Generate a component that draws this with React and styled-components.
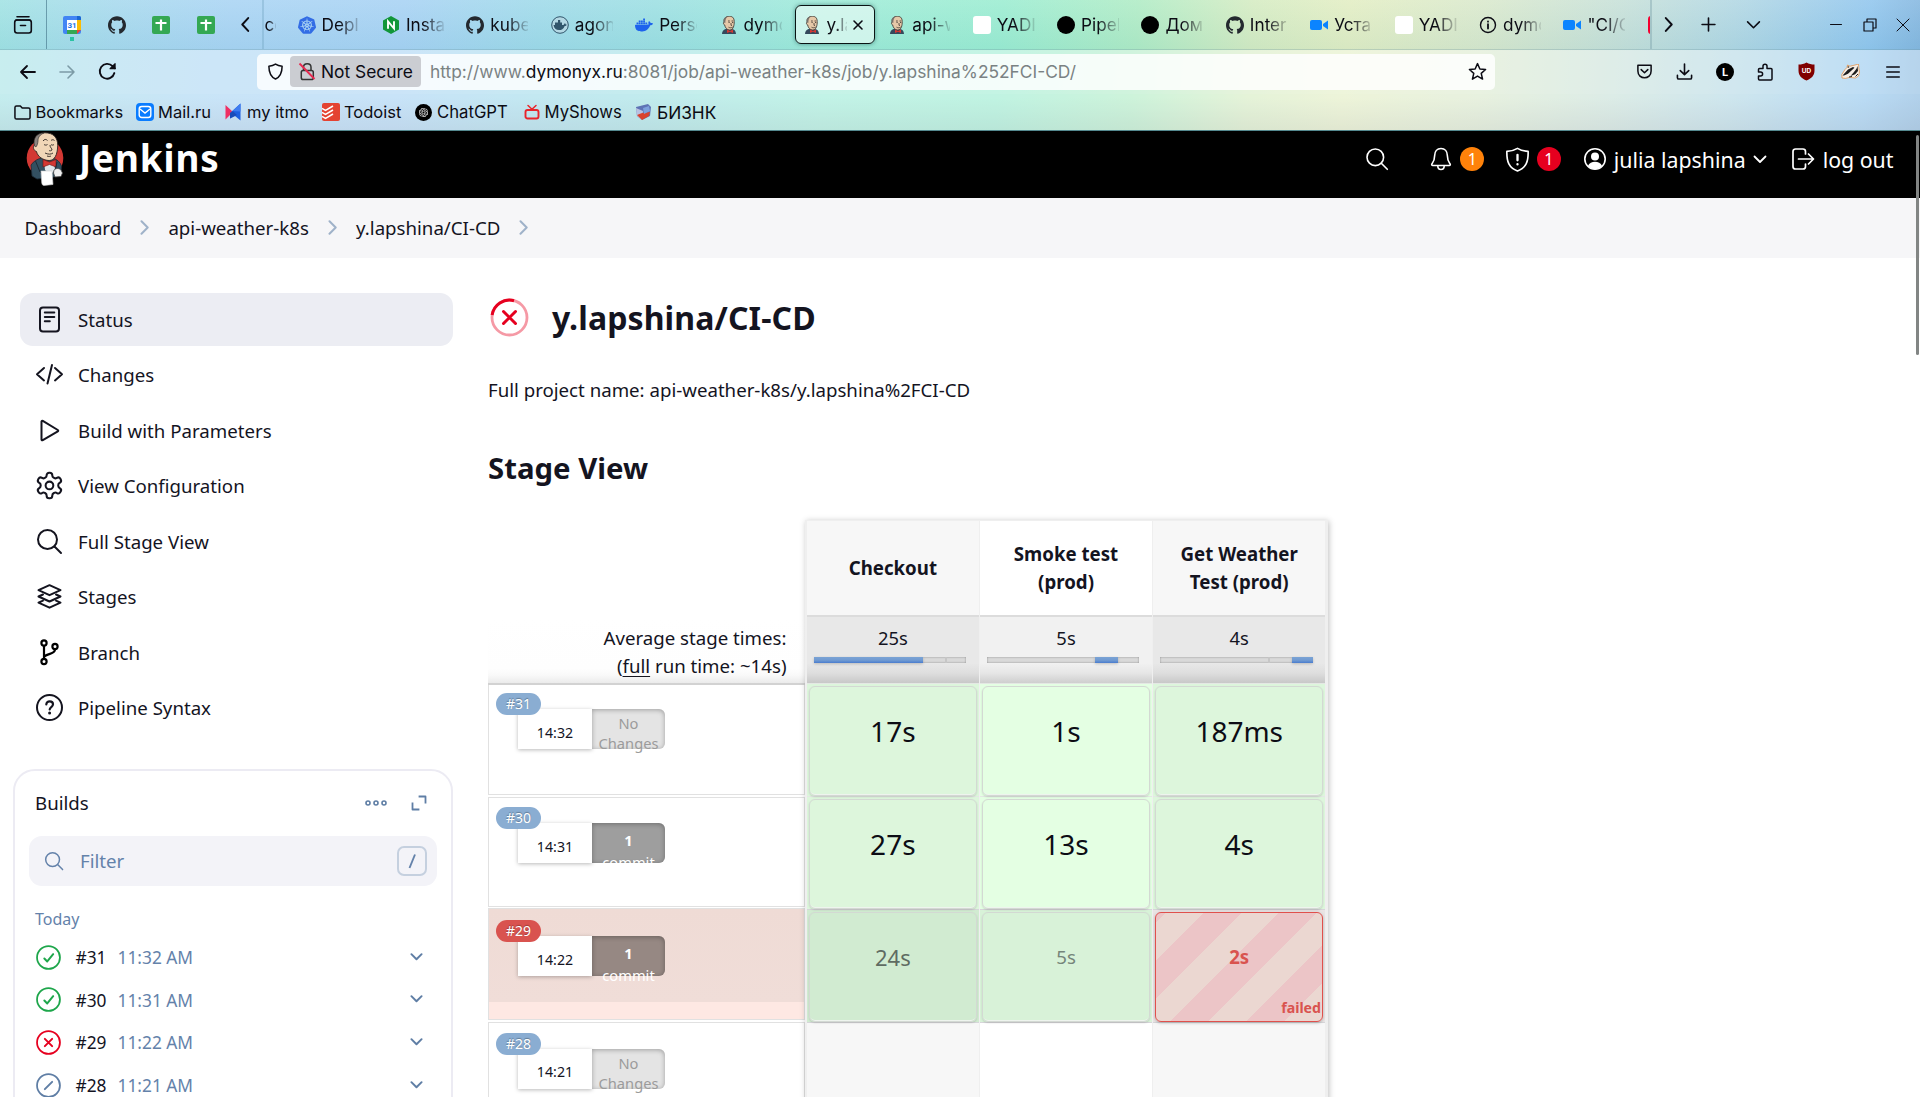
import React from "react";
import styled, { createGlobalStyle, css } from "styled-components";
import { SiKubernetes, SiGithub, SiDocker } from "react-icons/si";
import { RiOpenaiFill } from "react-icons/ri";

const NOTO = `"Noto Sans", "Open Sans", sans-serif`;
const CHROME = `Inter, "Noto Sans", sans-serif`;

const Global = createGlobalStyle`
  *, *::before, *::after { box-sizing: border-box; }
  html, body { margin: 0; padding: 0; height: 1097px; overflow: hidden; background: #fff; }
  svg { display: block; flex: none; }
`;

const Window = styled.div`
  position: relative;
  width: 1920px;
  height: 1097px;
  overflow: hidden;
  display: flex;
  flex-direction: column;
  background: #fff;
  font-family: ${NOTO};
  font-size: 18.67px;
  color: #14141f;
`;

/* ---------- browser chrome ---------- */

const Chrome = styled.header`
  height: 131px;
  flex: none;
  display: flex;
  flex-direction: column;
  font-family: ${CHROME};
  font-size: 16.5px;
  color: #0c0c14;
  border-bottom: 1px solid #54898f;
  background:
    linear-gradient(180deg, rgba(255,255,255,.1) 0%, rgba(0,110,140,.05) 38%, rgba(255,255,255,0) 39%, rgba(255,255,255,0) 75%, rgba(40,40,60,.1) 100%),
    linear-gradient(94deg, #a3e3e4 0%, #a9daee 6%, #abd5f4 12%, #a9d3f4 21%, #a1dbea 28%, #9ee0e3 34%, #a0ecd9 43%, #9dedd2 52%, #b1ecc6 59%, #d6ecc3 65%, #e3eec4 70%, #dae9cd 77%, #c8e1d9 84%, #b3d8e4 90%, #93c7ee 97%, #85b6de 100%);
`;

const TabStrip = styled.div`
  height: 50px;
  display: flex;
  align-items: stretch;
  border-bottom: 1px solid rgba(110, 150, 160, 0.3);
`;

const IconSlot = styled.div`
  width: ${(p) => p.$w}px;
  display: flex;
  align-items: center;
  justify-content: center;
  flex: none;
  border-right: ${(p) => (p.$line ? "1px solid rgba(70,120,140,.65)" : "0")};
`;

const Pinned = styled.div`
  position: relative;
  width: 44.6px;
  display: flex;
  align-items: center;
  justify-content: center;
`;

const Dot = styled.span`
  position: absolute;
  left: 20px;
  top: 37px;
  width: 4px;
  height: 4px;
  background: #2ac3a2;
`;

const Tabs = styled.div`
  width: 1390px;
  flex: none;
  display: flex;
  overflow: hidden;
  border-left: 2px solid rgba(110, 160, 190, 0.35);
  border-right: 2px solid rgba(110, 150, 160, 0.35);
  padding: 5px 0;
`;

const Tab = styled.div`
  width: 80px;
  height: 39px;
  margin: 0 4.4px 0 0;
  padding-left: 9px;
  flex: none;
  display: flex;
  align-items: center;
  gap: 6px;
  border-radius: 6px;
  ${(p) =>
    p.$active &&
    css`
      background: rgba(233, 250, 246, 0.65);
      border: 1.5px solid #0a1414;
      padding-left: 7.5px;
      gap: 5px;
      box-shadow: 0 0 4px rgba(0, 60, 60, 0.5);
    `}
`;

const PartTab = styled.div`
  width: 19.8px;
  margin-right: 4.4px;
  flex: none;
  display: flex;
  align-items: center;
`;

const TabText = styled.span`
  width: ${(p) => p.$w || 38}px;
  flex: none;
  line-height: 24px;
  font-size: 17.2px;
  white-space: nowrap;
  mask-image: linear-gradient(90deg, #000 45%, rgba(0, 0, 0, 0.1) 100%);
`;

const Square = styled.span`
  width: 18px;
  height: 18px;
  flex: none;
  background: ${(p) => p.$c};
  border-radius: ${(p) => p.$r || "3px"};
`;

const NavBar = styled.div`
  height: 44px;
  padding-bottom: 1px;
  display: flex;
  align-items: center;
  background: rgba(255, 255, 255, 0.4);
`;

const UrlBox = styled.div`
  width: 1238px;
  height: 36px;
  display: flex;
  align-items: center;
  border-radius: 5px;
  background: rgba(255, 255, 255, 0.82);
  padding: 0 8px 0 10px;
  font-size: 17.37px;
`;

const Insecure = styled.div`
  width: 131px;
  height: 31px;
  margin: 0 9px 0 6px;
  padding-left: 8px;
  display: flex;
  align-items: center;
  gap: 5px;
  border-radius: 4px;
  background: #cbcdd2;
  white-space: nowrap;
`;

const Url = styled.span`
  flex: 1;
  color: #7a8283;
  white-space: nowrap;
  b {
    font-weight: 400;
    color: #0c0c14;
  }
`;

const NavIcons = styled.div`
  display: flex;
  flex: 1;
  align-items: center;
  padding-left: 129px;
`;

const Bookmarks = styled.div`
  flex: 1;
  display: flex;
  align-items: center;
  padding: 0 0 0 14px;
  background: rgba(255, 255, 255, 0.36);
`;

const Bookmark = styled.div`
  width: ${(p) => p.$w}px;
  display: flex;
  align-items: center;
  gap: ${(p) => p.$gap || 5}px;
  font-size: ${(p) => p.$fs || 16.5}px;
  white-space: nowrap;
`;

const Toolbar = styled.div`
  display: flex;
  flex-direction: column;
  height: 81px;
`;

/* ---------- page header ---------- */

const PageHead = styled.div`
  height: 67px;
  flex: none;
  background: #000;
  color: #fff;
  display: flex;
  align-items: center;
  padding: 0 26.5px 10.5px 26px;
  font-size: 21.33px;
`;

const Brand = styled.div`
  display: flex;
  align-items: center;
  gap: 15px;
  flex: 1;
`;

const BrandName = styled.span`
  font-size: 36.8px;
  font-weight: 700;
  line-height: 44px;
  margin-top: -3px;
  letter-spacing: 0.9px;
`;

const HeadItem = styled.div`
  display: flex;
  align-items: center;
  gap: ${(p) => p.$gap || 8}px;
  margin-right: ${(p) => p.$mr || 0}px;
  white-space: nowrap;
`;

const Count = styled.span`
  width: 24px;
  height: 24px;
  border-radius: 50%;
  background: ${(p) => p.$c};
  font-size: 16px;
  line-height: 24px;
  text-align: center;
`;

const Crumbs = styled.nav`
  height: 60px;
  flex: none;
  background: #f6f6f8;
  display: flex;
  align-items: center;
  padding: 0 0 2px 24.6px;
`;

const Crumb = styled.span`
  display: flex;
  align-items: center;
  gap: 18.8px;
  margin-right: 19.4px;
`;

/* ---------- body ---------- */

const Body = styled.div`
  flex: 1;
  min-height: 0;
  display: flex;
  overflow: hidden;
`;

const Side = styled.aside`
  width: 488px;
  flex: none;
  padding-top: 35px;
`;

const Menu = styled.div`
  margin-left: 20px;
  width: 433px;
  display: flex;
  flex-direction: column;
  gap: 2.5px;
`;

const MenuItem = styled.div`
  height: 53px;
  padding: 0 0 1px 15px;
  display: flex;
  align-items: center;
  gap: 14px;
  border-radius: 13px;
  background: ${(p) => (p.$on ? "#ecedf3" : "transparent")};
`;

const BuildsCard = styled.section`
  margin: 34.5px 0 0 13px;
  width: 440px;
  height: 420px;
  border: 2px solid #ecebf3;
  border-radius: 22px;
  padding: 14.5px 14px 0;
`;

const BuildsHead = styled.div`
  height: 34px;
  padding: 0 10px 0 6px;
  display: flex;
  align-items: center;
  gap: 24px;
  span { flex: 1; }
`;

const Filter = styled.div`
  margin-top: 16.3px;
  height: 50px;
  padding: 0 10px 0 15px;
  display: flex;
  align-items: center;
  gap: 16px;
  border-radius: 13px;
  background: #f3f3f8;
  color: #6482aa;
  > span { flex: 1; }
`;

const Key = styled.kbd`
  width: 30px;
  height: 30px;
  display: flex;
  align-items: center;
  justify-content: center;
  border: 2px solid #c5d0df;
  border-radius: 7px;
`;

const Today = styled.div`
  margin: 21px 0 5.2px 6px;
  font-size: 16px;
  line-height: 24px;
  color: #6482aa;
`;

const BuildRow = styled.div`
  height: 42.6px;
  padding: 0 14px 0 7px;
  display: flex;
  align-items: center;
  font-size: 17.33px;
  b { width: 42px; margin-left: 14.5px; font-weight: 400; }
  span { flex: 1; color: #6482aa; }
  > svg:last-child { margin-bottom: 2px; }
`;

const Main = styled.main`
  flex: 1;
  min-width: 0;
  padding-top: 34px;
`;

const TitleRow = styled.div`
  height: 51px;
  padding-left: 2px;
  display: flex;
  align-items: center;
  gap: 23px;
`;

const Title = styled.h1`
  margin: 0;
  font-size: 32px;
  line-height: 48px;
  font-weight: 700;
  letter-spacing: 0.12px;
`;

const FullName = styled.p`
  margin: 33px 0 0;
  line-height: 28px;
`;

const Heading = styled.h2`
  margin: 42px 0 0;
  font-size: 29.33px;
  line-height: 44px;
  font-weight: 700;
`;

const StageView = styled.div`
  margin-top: 30px;
  display: flex;
  align-items: flex-start;
`;

const RunColumn = styled.div`
  width: 317px;
  flex: none;
  padding-top: 98px;
`;

const AvgNote = styled.div`
  height: 67px;
  padding: 6px 18.5px 0 0;
  text-align: right;
  line-height: 28px;
  border-bottom: 2px solid #d2d2d2;
  background: linear-gradient(180deg, #fff 0%, #fefefe 78%, #f9f9f9 88%, #ebebeb 100%);
  u { text-underline-offset: 3px; text-decoration-thickness: 1px; }
`;

const Run = styled.div`
  height: ${(p) => (p.$first ? 109.5 : p.$failed ? 111.5 : 110.5)}px;
  margin: ${(p) => (p.$failed ? -1.5 : 0)}px 0 2.4px;
  padding: ${(p) => (p.$first ? 8 : p.$failed ? 11 : 9.5)}px 0 0 7px;
  border: 1px solid #e1e1e1;
  border-top-width: ${(p) => (p.$first ? 0 : 1)}px;
  background: ${(p) =>
    p.$failed ? "linear-gradient(180deg, #efdbd5 0, #f0ddd8 93px, #fee8e3 93px)" : "#fff"};
`;

const RunId = styled.div`
  position: relative;
  width: 45px;
  height: 22px;
  border-radius: 11px;
  background: ${(p) => (p.$failed ? "#d9534f" : "#8aadd2")};
  color: #fff;
  font-size: 14px;
  line-height: 22px;
  text-align: center;
  text-shadow: 0 -1px 1px rgba(0, 0, 0, 0.3);
`;

const RunInfo = styled.div`
  margin: -6px 0 0 22px;
  display: flex;
`;

const RunTime = styled.div`
  width: 74px;
  height: 40px;
  padding-top: 9.5px;
  background: #fff;
  box-shadow: 0 1px 4px rgba(0, 0, 0, 0.28);
  font-size: 14.2px;
  line-height: 28px;
  text-align: center;
`;

const Changes = styled.div`
  width: 73px;
  height: 40px;
  padding-top: ${(p) => (p.$commit ? 6 : 4)}px;
  border-radius: 0 6px 6px 0;
  font-size: 14.67px;
  line-height: ${(p) => (p.$commit ? 22 : 20)}px;
  text-align: center;
  background: ${(p) => (p.$commit ? (p.$failed ? "#968883" : "#9e9e9e") : "#e4e4e4")};
  color: ${(p) => (p.$commit ? "#fff" : "#9b9b9b")};
  box-shadow: inset 0 1px 5px rgba(0, 0, 0, 0.3);
  b { display: block; line-height: 22px; }
`;

const StageGrid = styled.div`
  width: 522.5px;
  height: 620px;
  display: grid;
  grid-template-columns: repeat(3, 173.2px);
  grid-template-rows: 95.5px 66.5px repeat(3, 113px) 113px;
  background: #efefef;
  border: 1.5px solid #efefef;
  border-left-width: 2px;
  box-shadow: 1px 1px 6px rgba(0, 0, 0, 0.25);
`;

const tone = (odd, oddTone, evenTone) => (odd ? oddTone : evenTone);

const StageHead = styled.div`
  margin-right: 1.5px;
  padding: 0 20px;
  display: flex;
  align-items: center;
  justify-content: center;
  text-align: center;
  font-weight: 700;
  font-size: 18.67px;
  line-height: 28px;
  background: ${(p) => tone(p.$odd, "#f7f7f7", "#fff")};
  border-bottom: 2px solid #dcdcdc;
`;

const StageAvg = styled.div`
  margin-right: 1.5px;
  padding: 7.5px 12.5px 0 6.5px;
  background: ${(p) =>
    tone(
      p.$odd,
      "linear-gradient(180deg, #e8e8e8 0%, #e8e8e8 70%, #dedede 85%, #c8c8c8 100%)",
      "linear-gradient(180deg, #f1f1f1 0%, #f1f1f1 70%, #e6e6e6 85%, #cecece 100%)"
    )};
  span { display: block; text-align: center; line-height: 28px; padding-left: 6px; font-size: 18.4px; }
`;

const Track = styled.div`
  margin-top: 4.5px;
  height: 6px;
  display: flex;
  background: #d9d9d9;
  box-shadow: inset 0 0 2px rgba(0, 0, 0, 0.4);
`;

const Fill = styled.div`
  height: 6px;
  background: linear-gradient(180deg, #7ba3d4 0, #6f9ad2 55%, #4a7cce 100%);
  box-shadow: 0 1px 3px rgba(0, 0, 0, 0.2);
`;

const Notch = styled.div`
  width: 2px;
  height: 6px;
  background: #c6c6c6;
`;

const Cell = styled.div`
  margin-right: 1.5px;
  padding: 1.5px 2px 0;
  background: ${(p) => p.$bg};
  border-top: 1px solid ${(p) => (p.$dim ? "#d6d6d9" : "#e4e8e4")};
`;

const CellInner = styled.div`
  position: relative;
  height: 110.5px;
  padding-top: 24.5px;
  border: 1px solid #d3d9d3;
  border-radius: 6px;
  box-shadow: inset 0 -2px 0 -1px #eef4ee, 0 1px 2px rgba(0, 0, 0, 0.14);
  text-align: center;
  font-size: ${(p) => p.$fs}px;
  line-height: 40px;
  color: ${(p) => p.$c};
  ${(p) =>
    p.$failed &&
    css`
      border: 1.5px solid #e0504c;
      font-weight: 700;
      background: repeating-linear-gradient(135deg, #ecc5c7 0 6.8px, #ebd7d1 6.8px 33.5px, #ecc5c7 33.5px 53.4px);
      box-shadow: 0 1px 3px rgba(0, 0, 0, 0.25);
    `}
`;

const FailedTag = styled.span`
  position: absolute;
  right: 1px;
  bottom: 3px;
  font-size: 14.2px;
  line-height: 20px;
  font-weight: 700;
`;

const Scrollbar = styled.div`
  position: absolute;
  right: 1px;
  top: 135px;
  width: 3px;
  height: 220px;
  border-radius: 2px;
  background: #828584;
`;

/* ---------- icons ---------- */

const Line = ({ s = 24, w = 1.5, c = "currentColor", children, vb = 24 }) => (
  <svg width={s} height={s} viewBox={`0 0 ${vb} ${vb}`} fill="none" stroke={c} strokeWidth={w} strokeLinecap="round" strokeLinejoin="round">
    {children}
  </svg>
);

const Butler = ({ s = 18 }) => (
  <svg width={s} height={s} viewBox="0 0 18 18">
    <path d="M2 18c0-2.500 1.500-4.500 3.500-5h6.500c2.500.5 3.800 2 4 5z" fill="#35495c" />
    <path d="M4 6C3.600 2 6 .3 9.500.3s5 2.200 4.700 6.700c-.2 4.200-1.700 7-4.500 7C7 14 5 11.500 4.700 9 3.400 8.500 3 7 4 6z" fill="#e6c8a8" stroke="#3a322d" strokeWidth=".8" />
    <path d="M4 6.500C2.800 2.500 5 .6 8 .5 5.800 1.800 5.400 3.500 5.300 7z" fill="#77716c" />
    <path d="M8 5h1.800M11.500 5h1.700M8.500 6.500h1.200M12 6.500h1.200M11 7v2.300l1 .1M8.500 11.200c1.500.8 3 .8 4.200-.1" stroke="#3a322d" strokeWidth=".8" fill="none" />
    <path d="m7 13.500 3 1.400 3-1.400v3.600l-3-1.300-3 1.300z" fill="#d33833" />
  </svg>
);

const JenkinsLogo = () => (
  <svg width="38" height="54" viewBox="0 0 38 54">
    <ellipse cx="19" cy="26" rx="18.300" ry="19" fill="#d33833" />
    <path d="M5 33c3-4 6-6 11-7h10c5 1 8 4 9.500 8l-.5 8-7 3-17 2-5-3z" fill="#335061" stroke="#1d2b36" strokeWidth=".8" />
    <path d="M8.500 13C7.500 5 12 .8 19 .8c8 0 13 4.500 12.700 13-.3 9-3 14.700-8.500 14.700-6 0-11.700-4-12.700-9-3-1-4-4.500-2-6.500z" fill="#f0d6b7" stroke="#2b2522" strokeWidth=".9" />
    <path d="M8.500 14C6.500 6 11 1 18 .9c-4 2-6 4-6 8 0 2-1 5-2 6z" fill="#8b8580" stroke="#2b2522" strokeWidth=".6" />
    <path d="M17 9c1.500-2 3-2 4.500-.5M25 8.500c1-1 2.500-1 3.500 0M18 12.500c1 .8 2.500.8 3.500 0M25 12.500c1 .8 2 .8 3 0M24 13c0 3 2 3 2 5-1 1-2 1-3 .5M19 21c3 1.500 6 1.500 8 0M21 24c1.500.6 3 .6 4 0" stroke="#2b2522" strokeWidth=".9" fill="none" />
    <path d="M18 29l5 3 5-3 1 9-5 5-5-5z" fill="#dfe6ea" />
    <path d="M17 27.500 23.500 30l6.500-2.500V35L23.500 32.500 17 35z" fill="#d33833" stroke="#6d1210" strokeWidth=".6" />
    <path d="M9.500 29 14 40l8 4M31 30l-2 10" stroke="#1d2b36" strokeWidth="1" fill="none" />
    <path d="M28 38c2-2 5-2 7 0l1.500 3-1.500 3.500-6 .5-1.500-4z" fill="#efefef" stroke="#444" strokeWidth=".8" />
    <path d="M15 39h11l1 13.500-9 1c-1.500 0-2-1-2.300-3z" fill="#fff" stroke="#cfcfcf" strokeWidth=".6" />
  </svg>
);

const Calendar = () => (
  <svg width="18" height="18" viewBox="0 0 18 18">
    <rect width="18" height="18" rx="2" fill="#4285f4" />
    <path d="M14 4h4v10h-4z" fill="#fbbc04" />
    <path d="M4 14h10v4H4z" fill="#34a853" />
    <path d="M14 18v-4h4z" fill="#ea4335" />
    <path d="M14 0h2a2 2 0 0 1 2 2v2h-4z" fill="#1967d2" />
    <path d="M4 4h10v10H4z" fill="#fff" />
    <text x="9" y="12" textAnchor="middle" fontSize="8" fontWeight="700" fontFamily="Roboto, sans-serif" fill="#1a73e8">31</text>
  </svg>
);

const Sheets = () => (
  <svg width="18" height="18" viewBox="0 0 18 18">
    <rect width="18" height="18" rx="2" fill="#34a853" />
    <path d="M3.500 7h11M9 3.500v11" stroke="#fff" strokeWidth="2.200" />
  </svg>
);

const NginxHex = () => (
  <svg width="18" height="18" viewBox="0 0 18 18">
    <path d="M9 0 17 4.500v9L9 18 1 13.500v-9z" fill="#119639" />
    <path d="M6 12.800V5.300l6 7.200V5.200" stroke="#fff" strokeWidth="1.900" fill="none" />
  </svg>
);

const DockerRing = () => (
  <svg width="18" height="18" viewBox="0 0 18 18">
    <circle cx="9" cy="9" r="8.300" fill="#b4d8e4" stroke="#31556b" strokeWidth="1" />
    <path d="M2.500 9h10l1.500-2 .8 1.500 1.200.2c-.6 1-1.500 1.200-2.300 1.200C12.500 13 10.500 14 8 14c-3 0-5-1.500-5.500-5zM4 6.500h7V9H4zM7 4h2.200v2.500H7z" fill="#31556b" />
  </svg>
);

const Video = () => (
  <svg width="18" height="18" viewBox="0 0 18 18">
    <rect x="0" y="4" width="12" height="10" rx="2" fill="#0b84ff" />
    <path d="m13 8 5-3.500v9L13 10z" fill="#0b84ff" />
  </svg>
);

const Info = () => (
  <Line s={18} vb={18} w={1.400}>
    <circle cx="9" cy="9" r="7.500" />
    <path d="M9 8.200v4.300M9 5.400v.3" strokeWidth="1.800" />
  </Line>
);

const Github = () => <SiGithub size={18} color="#24292f" />;

const SearchIcon = ({ s, w = 1.5, c }) => (
  <Line s={s} w={w} c={c}>
    <circle cx="10.300" cy="10.300" r="8.300" />
    <path d="m16.300 16.300 6 6" />
  </Line>
);

const Chevron = ({ d = "down", s = 14, w = 1.800, c }) => (
  <Line s={s} vb={14} w={w} c={c}>
    <path d={{ down: "M1.500 4.500 7 10l5.500-5.500", left: "M9.500 1 4 7l5.500 6", right: "M4.500 1 10 7l-5.500 6" }[d]} />
  </Line>
);

const CrumbArrow = () => (
  <svg width="9" height="15" viewBox="0 0 9 15" fill="none" stroke="#9fb2c9" strokeWidth="2" strokeLinecap="round" strokeLinejoin="round">
    <path d="M1.500 1.200 7.700 7.500 1.500 13.800" />
  </svg>
);

const MenuIcons = {
  status: (
    <>
      <rect x="5" y="2.500" width="19" height="24" rx="3" />
      <path d="M9.800 7.500h9.500M9.800 12h9.500M9.800 16.300h5" />
    </>
  ),
  changes: <path d="M9 8 2 14.200 9 20.400M20 8l7 6.200-7 6.200M17 5 12.500 23.500" />,
  play: <path d="M6.500 5.500v18c0 .8.700 1 1.300.7l15-8.800c.6-.4.600-1 0-1.400L7.800 4.800c-.6-.3-1.300 0-1.300.7z" />,
  gear: (
    <g transform="translate(-.9 -.9) scale(1.280)" strokeWidth="1.600">
      <path d="M12.220 2h-.44a2 2 0 0 0-2 2v.18a2 2 0 0 1-1 1.730l-.43.25a2 2 0 0 1-2 0l-.15-.08a2 2 0 0 0-2.730.73l-.22.38a2 2 0 0 0 .73 2.730l.15.1a2 2 0 0 1 1 1.720v.51a2 2 0 0 1-1 1.740l-.15.09a2 2 0 0 0-.73 2.730l.22.38a2 2 0 0 0 2.730.73l.15-.08a2 2 0 0 1 2 0l.43.25a2 2 0 0 1 1 1.730V20a2 2 0 0 0 2 2h.44a2 2 0 0 0 2-2v-.18a2 2 0 0 1 1-1.730l.43-.25a2 2 0 0 1 2 0l.15.08a2 2 0 0 0 2.730-.73l.22-.39a2 2 0 0 0-.73-2.730l-.15-.08a2 2 0 0 1-1-1.740v-.5a2 2 0 0 1 1-1.740l.15-.09a2 2 0 0 0 .73-2.730l-.22-.38a2 2 0 0 0-2.730-.73l-.15.08a2 2 0 0 1-2 0l-.43-.25a2 2 0 0 1-1-1.730V4a2 2 0 0 0-2-2z" />
      <circle cx="12" cy="12" r="3" />
    </g>
  ),
  search: (
    <>
      <circle cx="12.500" cy="12.500" r="9.500" />
      <path d="m19.500 19.500 6.500 6.500" />
    </>
  ),
  stages: (
    <>
      <path d="M14.500 3.200 25.500 8.200 14.500 13.200 3.500 8.200z" />
      <path d="m8 12.500-4.500 2L14.500 19.500 25.500 14.500 21 12.500" />
      <path d="m8 18.700-4.500 2L14.500 25.700 25.500 20.700 21 18.700" />
    </>
  ),
  branch: (
    <g strokeWidth="2.200" stroke="#000">
      <circle cx="9" cy="5" r="2.600" />
      <circle cx="9" cy="23.500" r="2.600" />
      <circle cx="20" cy="8.500" r="2.600" />
      <path d="M9 8v12.500M20 11.500c0 5-9 4-11 7.500" />
    </g>
  ),
  help: (
    <>
      <circle cx="14.500" cy="14.500" r="12.500" />
      <path d="M11.300 11.500c0-4.300 6.700-4 6.700-.2 0 2.700-3.300 2.700-3.300 5.200" strokeWidth="2.200" />
      <circle cx="14.600" cy="20" r=".7" strokeWidth="1.600" />
    </>
  ),
};

const ResultIcon = ({ kind }) => {
  const color = { ok: "#1ea64b", bad: "#e6001f", aborted: "#5f7ea5" }[kind];
  const mark = { ok: "m8 13 2.800 2.800L16.500 8.800", bad: "m8.500 8.500 7 7M15.500 8.500l-7 7", aborted: "m8.500 15.500 7-7" }[kind];
  return (
    <Line s={25} w={1.700} c={color}>
      <circle cx="12" cy="12" r="11" />
      <path d={mark} strokeWidth="1.900" />
    </Line>
  );
};

/* ---------- data ---------- */

const tabs = [
  [<SiKubernetes size={18} color="#326ce5" />, "Depl"],
  [<NginxHex />, "Insta"],
  [<Github />, "kube"],
  [<DockerRing />, "agon"],
  [<SiDocker size={18} color="#1d63ed" />, "Perso"],
  [<Butler />, "dymo"],
  [<Butler />, "y.la", true],
  [<Butler />, "api-w"],
  [<Square $c="#fff" />, "YADI"],
  [<Square $c="#000" $r="50%" />, "Pipel"],
  [<Square $c="#000" $r="50%" />, "Дом"],
  [<Github />, "Inter"],
  [<Video />, "Уста"],
  [<Square $c="#fff" />, "YADI"],
  [<Info />, "dymo"],
  [<Video />, "\"CI/C"],
  [<Square $c="#f5002f" />, ""],
];

const menu = [
  ["status", "Status"],
  ["changes", "Changes"],
  ["play", "Build with Parameters"],
  ["gear", "View Configuration"],
  ["search", "Full Stage View"],
  ["stages", "Stages"],
  ["branch", "Branch"],
  ["help", "Pipeline Syntax"],
];

const builds = [
  ["ok", "#31", "11:32 AM"],
  ["ok", "#30", "11:31 AM"],
  ["bad", "#29", "11:22 AM"],
  ["aborted", "#28", "11:21 AM"],
];

const runs = [
  { id: "#31", time: "14:32" },
  { id: "#30", time: "14:31", commit: true },
  { id: "#29", time: "14:22", commit: true, failed: true },
  { id: "#28", time: "14:21" },
];

const stages = [
  { name: "Checkout", avg: "25s", offset: 0, width: 109, notch: 22 },
  { name: "Smoke test (prod)", avg: "5s", offset: 108, width: 23 },
  { name: "Get Weather Test (prod)", avg: "4s", offset: 132, width: 21, notch: 108 },
];

const G = "#ddf6dc";
const GL = "#e4ffe3";
const cells = [
  ["17s", "1s", "187ms"].map((t, i) => ({ t, bg: i === 1 ? GL : G, fs: 28, c: "#0c0c14" })),
  ["27s", "13s", "4s"].map((t, i) => ({ t, bg: i === 1 ? GL : G, fs: 28, c: "#0c0c14" })),
  [
    { t: "24s", bg: "#d1ebd1", fs: 22, c: "#5f6b62", dim: true },
    { t: "5s", bg: "#d8f2d8", fs: 18.67, c: "#75857a", dim: true },
    { t: "2s", bg: "#e9e4e4", fs: 18.67, c: "#d9534f", failed: true, dim: true },
  ],
];

function BrowserChrome() {
  return (
    <Chrome>
      <TabStrip>
        <IconSlot $w={47} $line>
          <Line s={20} vb={20} w={1.600}>
            <path d="M4 1.800h12M3 5h14" />
            <rect x="1.700" y="5" width="16.600" height="13" rx="2.500" />
            <path d="M7.500 10.500h5" />
          </Line>
        </IconSlot>
        <IconSlot $w={3} />
        <Pinned><Calendar /><Dot /></Pinned>
        <Pinned><Github /></Pinned>
        <Pinned><Sheets /></Pinned>
        <Pinned><Sheets /></Pinned>
        <IconSlot $w={34}><Chevron d="left" s={15} /></IconSlot>
        <Tabs>
          <PartTab>
            <TabText $w={12}>co</TabText>
          </PartTab>
          {tabs.map(([icon, label, active], i) => (
            <Tab key={i} $active={active}>
              {icon}
              <TabText $w={active ? 21 : 38}>{label}</TabText>
              {active && (
                <Line s={12} vb={12} w={1.600}>
                  <path d="m2 2 8 8M10 2 2 10" />
                </Line>
              )}
            </Tab>
          ))}
        </Tabs>
        <IconSlot $w={33}><Chevron d="right" s={15} /></IconSlot>
        <IconSlot $w={47}><Line s={15} vb={14}><path d="M7 1v12M1 7h12" /></Line></IconSlot>
        <IconSlot $w={42}><Chevron s={15} w={1.500} /></IconSlot>
        <IconSlot $w={47} />
        <IconSlot $w={30}>
          <Line s={12} vb={12} w={1}><path d="M.5 5.500h11" /></Line>
        </IconSlot>
        <IconSlot $w={38}>
          <Line s={14} vb={14} w={1.200}><path d="M1 4h9v9H1zM4 4V1h9v9h-3" /></Line>
        </IconSlot>
        <IconSlot $w={28}>
          <Line s={14} vb={14} w={1}><path d="m1 1 12 12M13 1 1 13" /></Line>
        </IconSlot>
      </TabStrip>
      <Toolbar>
        <NavBar>
          <IconSlot $w={55}><Line s={18} vb={18} w={1.800}><path d="M16 9H2M8 3 2 9l6 6" /></Line></IconSlot>
          <IconSlot $w={23}><Line s={18} vb={18} w={1.600} c="#7c9ba6"><path d="M2 9h14M10 3l6 6-6 6" /></Line></IconSlot>
          <IconSlot $w={59}>
            <Line s={19} vb={18} w={1.800}>
              <path d="M15.500 10.500A7 7 0 1 1 13.800 4L16 6" />
              <path d="M16.200 1.500V6.300h-4.800z" fill="currentColor" strokeWidth="1" />
            </Line>
          </IconSlot>
          <IconSlot $w={120} />
          <UrlBox>
            <Line s={17} vb={18} w={1.600}><path d="M9 1.200c2 1.300 4.500 2 7 2.200 0 7-1.500 11-7 13.600C3.500 14.400 2 10.400 2 3.400c2.500-.2 5-.9 7-2.200z" /></Line>
            <Insecure>
              <svg width="18" height="19" viewBox="0 0 18 19" fill="none">
                <rect x="3.300" y="8.500" width="12" height="9" rx="1.800" stroke="#333" strokeWidth="1.500" />
                <path d="M5.500 8.500V5.200c0-4.700 7.500-4.700 7.500 0v3.300" stroke="#333" strokeWidth="1.500" />
                <path d="m1.500 1.500 15 15.500" stroke="#e8284f" strokeWidth="1.800" />
              </svg>
              Not Secure
            </Insecure>
            <Url>
              http://www.<b>dymonyx.ru</b>:8081/job/api-weather-k8s/job/y.lapshina%252FCI-CD/
            </Url>
            <Line s={19} vb={24} w={1.900}><path d="m12 2 3 6.800 7.200.7-5.500 4.900 1.700 7.200L12 17.800l-6.400 3.800 1.700-7.200L1.800 9.500 9 8.800z" /></Line>
          </UrlBox>
          <NavIcons>
            <IconSlot $w={41}><Line s={17} vb={18} w={1.600}><path d="M2 2.500h14v6c0 9.500-14 9.500-14 0zM5.500 7 9 10.300 12.500 7" /></Line></IconSlot>
            <IconSlot $w={39}><Line s={17} vb={18} w={1.700}><path d="M9 1v11M4.500 8 9 12.300 13.500 8M1.500 13v2.500c0 .8.500 1.500 1.500 1.500h12c1 0 1.500-.7 1.500-1.500V13" /></Line></IconSlot>
            <IconSlot $w={41}>
              <svg width="18" height="18" viewBox="0 0 18 18">
                <circle cx="9" cy="9" r="9" fill="#000" />
                <text x="9" y="13" textAnchor="middle" fontSize="11" fontWeight="700" fontFamily="Inter, sans-serif" fill="#fff">L</text>
              </svg>
            </IconSlot>
            <IconSlot $w={39}><Line s={18} vb={18} w={1.500}><path d="M7 5.500V3c0-2.500 4-2.500 4 0v2.500h4c.7 0 1 .5 1 1v9.500c0 .6-.4 1-1 1H3.500c-.6 0-1-.4-1-1V13h2c2.800 0 2.800-4 0-4h-2V6.500c0-.6.400-1 1-1z" /></Line></IconSlot>
            <IconSlot $w={44}>
              <svg width="17" height="19" viewBox="0 0 17 18">
                <path d="M8.500 0c2.500 1.400 5 2 8 2v6c0 5-3 8-8 10C3.500 16 .5 13 .5 8V2c3 0 5.500-.6 8-2z" fill="#800000" />
                <text x="8.500" y="10.800" textAnchor="middle" fontSize="6.500" fontWeight="700" fontFamily="Inter, sans-serif" fill="#fff">UD</text>
              </svg>
            </IconSlot>
            <IconSlot $w={44}>
              <svg width="19" height="15" viewBox="0 0 19 15">
                <path d="M1 14 .8 10.500 4 5.500 6 3.500 6.500 1 9 2.200 14 1l3.500-1 .3 4 .7 4-1 4-3 2-6-.6-4 1z" fill="#f6eee6" stroke="#e2893c" strokeWidth=".7" />
                <path d="m1.500 11.500 5.500-6L12 3l1.500.8-6.500 6-4 1.700zM9.500 12l3.300-3.800 2.700-3.500L16.500 2l.5 5-2.800 3.200zM6.800 2l1.700.9-1.700 1zM3.500 12.800l2.500-.3" fill="#1d1d1d" />
                <path d="M14.500 12.500 17 10M8 13l3-.5" stroke="#222" strokeWidth="1" />
              </svg>
            </IconSlot>
            <IconSlot $w={41}><Line s={14} vb={14} w={1.500}><path d="M.7 2h12.600M.7 7h12.600M.7 12h12.600" /></Line></IconSlot>
          </NavIcons>
        </NavBar>
        <Bookmarks>
          <Bookmark $w={122} $gap={4.5}>
            <Line s={17} vb={18} w={1.600}><path d="M1 3.800C1 2.800 1.700 2 2.700 2h4l2 2.200h6.600c1 0 1.700.8 1.700 1.800v8.200c0 1-.7 1.800-1.700 1.800H2.700c-1 0-1.700-.8-1.700-1.800z" /></Line>
            Bookmarks
          </Bookmark>
          <Bookmark $w={88} $gap={4}>
            <svg width="18" height="18" viewBox="0 0 18 18" fill="none">
              <rect width="18" height="18" rx="4" fill="#0a7cff" />
              <rect x="3.200" y="3.500" width="11.600" height="11" rx="2.500" stroke="#fff" strokeWidth="1.400" />
              <path d="m4 6 5 4 5-4" stroke="#fff" strokeWidth="1.400" />
            </svg>
            Mail.ru
          </Bookmark>
          <Bookmark $w={98}>
            <svg width="18" height="18" viewBox="0 0 18 18">
              <path d="M1.500 2 9 9l-7.500 7.500z" fill="#ef2f63" />
              <path d="M16.500.5v17L11 13l-5 2.500V10z" fill="#1d5fe0" />
              <path d="M8.500 8l8-7.500v8z" fill="#3f7cf0" />
              <path d="m6 10 3-1.500 4 3.500-2 1-5 2.500z" fill="#173f9e" opacity=".6" />
            </svg>
            my itmo
          </Bookmark>
          <Bookmark $w={93} $gap={4}>
            <svg width="18" height="18" viewBox="0 0 18 18" fill="none">
              <rect width="18" height="18" rx="2" fill="#e44332" />
              <path d="M0 5.500 3.500 7.500 11 3M0 9.500l3.500 2L11 7M0 13.500l3.500 2L11 11" stroke="#fff" strokeWidth="1.500" />
            </svg>
            Todoist
          </Bookmark>
          <Bookmark $w={109} $fs={16.7}>
            <svg width="17" height="17" viewBox="0 0 17 17">
              <circle cx="8.500" cy="8.500" r="8.500" fill="#000" />
              <g transform="translate(3 3)" color="#fff"><RiOpenaiFill size={11} /></g>
            </svg>
            ChatGPT
          </Bookmark>
          <Bookmark $w={111} $fs={16.7} $gap={4.5}>
            <Line s={16} vb={16} w={1.900} c="#e8242b"><rect x="1.500" y="6" width="13" height="8.500" rx="2" /><path d="m4 1.500 4 3.800 4-3.800" strokeWidth="1.500" /></Line>
            MyShows
          </Bookmark>
          <Bookmark $w={100} $fs={17.3}>
            <svg width="17" height="18" viewBox="0 0 17 18">
              <path d="M1 4 13 1l3 3-1 9-8 4-5-4z" fill="#5e73b5" />
              <path d="M1 5l7 3-1 9-5-4z" fill="#b9c2e2" />
              <path d="m2 12 5-2 8-1-1 4-7 4z" fill="#d8432f" />
              <path d="m8 5 6-2 1 5-6 3z" fill="#7da0dd" />
            </svg>
            БИЗНК
          </Bookmark>
        </Bookmarks>
      </Toolbar>
    </Chrome>
  );
}

function StageTable() {
  return (
    <StageView>
      <RunColumn>
        <AvgNote>
          Average stage times:
          <br />(<u>full</u> run time: ~14s)
        </AvgNote>
        {runs.map((r, i) => (
          <Run key={r.id} $first={i === 0} $failed={r.failed}>
            <RunId $failed={r.failed}>{r.id}</RunId>
            <RunInfo>
              <RunTime>{r.time}</RunTime>
              <Changes $commit={r.commit} $failed={r.failed}>
                {r.commit ? (<><b>1</b>commit</>) : (<>No<br />Changes</>)}
              </Changes>
            </RunInfo>
          </Run>
        ))}
      </RunColumn>
      <StageGrid>
        {stages.map((s, i) => <StageHead key={s.name} $odd={i !== 1}>{s.name}</StageHead>)}
        {stages.map((s, i) => (
          <StageAvg key={s.name} $odd={i !== 1}>
            <span>{s.avg}</span>
            <Track>
              {i === 2 && <><div style={{ width: s.notch }} /><Notch /></>}
              <Fill style={{ width: s.width, marginLeft: i === 2 ? s.offset - s.notch - 2 : s.offset }} />
              {i === 0 && <><div style={{ width: s.notch }} /><Notch /></>}
            </Track>
          </StageAvg>
        ))}
        {cells.map((row, r) =>
          row.map((c) => (
            <Cell key={c.t + r} $bg={c.bg} $dim={c.dim}>
              <CellInner $fs={c.fs} $c={c.c} $failed={c.failed}>
                {c.t}
                {c.failed && <FailedTag>failed</FailedTag>}
              </CellInner>
            </Cell>
          ))
        )}
        {stages.map((s, i) => <Cell key={s.name} $bg={tone(i !== 1, "#f7f7f7", "#fff")} $dim />)}
      </StageGrid>
    </StageView>
  );
}

export default function App() {
  return (
    <Window>
      <Global />
      <BrowserChrome />
      <PageHead>
        <Brand>
          <JenkinsLogo />
          <BrandName>Jenkins</BrandName>
        </Brand>
        <HeadItem $mr={40.5}><SearchIcon s={24} w={1.600} /></HeadItem>
        <HeadItem $mr={21} $gap={7}>
          <Line s={24} w={1.600}><path d="M12 1.500c-4 0-6.300 3-6.300 6.800 0 5-1.200 6.500-2.700 8.500-.6.900-.3 1.700.8 1.700h16.400c1.100 0 1.400-.8.800-1.700-1.500-2-2.700-3.500-2.700-8.500 0-3.800-2.300-6.800-6.300-6.800zM8.800 19c0 4.600 6.400 4.600 6.400 0" /></Line>
          <Count $c="#ff820a">1</Count>
        </HeadItem>
        <HeadItem $mr={22} $gap={6.5}>
          <Line s={25} w={1.600}><path d="M12 1.300C9 3.200 5.800 4 1.800 4.200c-.3 10 2 15.800 10.200 18.800 8.200-3 10.500-8.800 10.200-18.800C18.200 4 15 3.200 12 1.300z" /><path d="M12 7.500v5.200M12 16.500v.2" strokeWidth="2.200" /></Line>
          <Count $c="#e6001f">1</Count>
        </HeadItem>
        <HeadItem $mr={24.5} $gap={7}>
          <svg width="24" height="24" viewBox="0 0 24 24" fill="none">
            <circle cx="12" cy="12" r="10.200" stroke="#fff" strokeWidth="1.600" />
            <circle cx="12" cy="9.500" r="4" fill="#fff" />
            <path d="M5 18.700c2.200-5.300 11.800-5.300 14 0-3.500 4.500-10.500 4.500-14 0z" fill="#fff" />
          </svg>
          julia lapshina
          <Chevron s={14} w={1.800} />
        </HeadItem>
        <HeadItem $gap={7.5}>
          <Line s={24} w={1.700}><path d="M14.500 7V4.500c0-1.500-1-2.500-2.500-2.500H4.500C3 2 2 3 2 4.500v15C2 21 3 22 4.500 22H12c1.500 0 2.500-1 2.500-2.500V17M7.500 12H22M17.500 7l5 5-5 5" /></Line>
          log out
        </HeadItem>
      </PageHead>
      <Crumbs>
        {["Dashboard", "api-weather-k8s", "y.lapshina/CI-CD"].map((c) => (
          <Crumb key={c}>
            {c}
            <CrumbArrow />
          </Crumb>
        ))}
      </Crumbs>
      <Body>
        <Side>
          <Menu>
            {menu.map(([icon, label], i) => (
              <MenuItem key={label} $on={i === 0}>
                <Line s={29} vb={29} w={2}>{MenuIcons[icon]}</Line>
                {label}
              </MenuItem>
            ))}
          </Menu>
          <BuildsCard>
            <BuildsHead>
              <span>Builds</span>
              <svg width="22" height="8" viewBox="0 0 22 8" fill="none" stroke="#5f7ea5" strokeWidth="1.600">
                <circle cx="3" cy="4" r="2" /><circle cx="11" cy="4" r="2" /><circle cx="19" cy="4" r="2" />
              </svg>
              <Line s={16} vb={16} w={1.800} c="#5f7ea5"><path d="M8.500 1.500h6v6M1.500 8.500v6h6" strokeLinecap="square" /></Line>
            </BuildsHead>
            <Filter>
              <SearchIcon s={20} w={1.800} />
              <span>Filter</span>
              <Key><Line s={18} vb={18} w={1.900}><path d="M12 2.500 6.500 16" strokeLinecap="butt" /></Line></Key>
            </Filter>
            <Today>Today</Today>
            {builds.map(([kind, id, time]) => (
              <BuildRow key={id}>
                <ResultIcon kind={kind} />
                <b>{id}</b>
                <span>{time}</span>
                <Chevron s={13} c="#5f7ea5" w={2.100} />
              </BuildRow>
            ))}
          </BuildsCard>
        </Side>
        <Main>
          <TitleRow>
            <Line s={39} vb={39} w={3} c="#e6001f">
              <circle cx="19.500" cy="19.500" r="17.500" opacity=".4" strokeWidth="2.800" />
              <path d="M2.100 17A17.500 17.500 0 0 1 24 2.700" strokeLinecap="butt" />
              <path d="m13.500 13.500 12 12M25.500 13.500l-12 12" />
            </Line>
            <Title>y.lapshina/CI-CD</Title>
          </TitleRow>
          <FullName>Full project name: api-weather-k8s/y.lapshina%2FCI-CD</FullName>
          <Heading>Stage View</Heading>
          <StageTable />
        </Main>
      </Body>
      <Scrollbar />
    </Window>
  );
}
